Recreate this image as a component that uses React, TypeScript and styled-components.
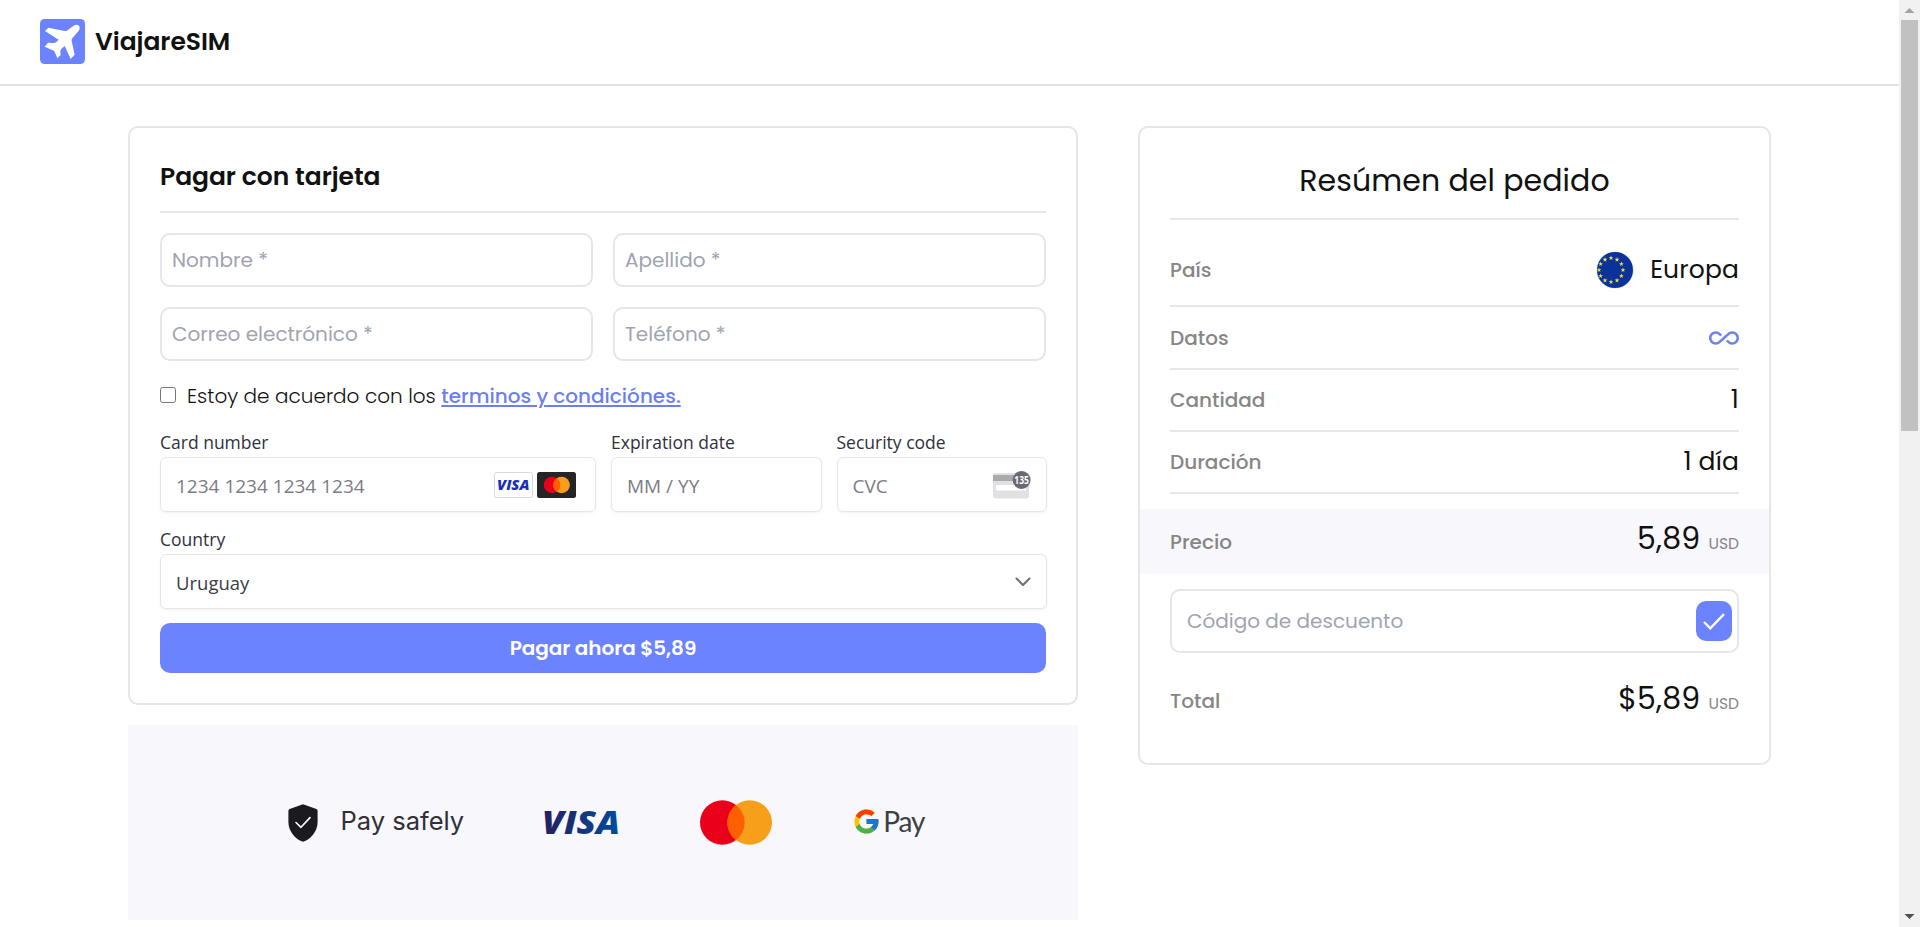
import React from 'react';
import { FcGoogle } from 'react-icons/fc';
import { MdAllInclusive } from 'react-icons/md';
import styled, { createGlobalStyle } from 'styled-components';

const GlobalStyle = createGlobalStyle`
    * {
        box-sizing: border-box;
    }
    body {
        margin: 0;
        background: #fff;
        color: #111;
        font-family: Poppins, Inter, sans-serif;
        font-size: 20px;
    }
`;

const Page = styled.div`
    display: flex;
    height: 100vh;
    overflow: hidden;
`;
const Main = styled.div`
    flex: 1;
    min-width: 0;
`;

const Header = styled.header`
    display: flex;
    align-items: center;
    gap: 10px;
    height: 86px;
    padding: 0 40px 1px;
    border-bottom: 2px solid #e2e2e2;
`;
const Brand = styled.span`
    font-size: 25px;
    font-weight: 600;
    letter-spacing: -0.05px;
`;

const Columns = styled.main`
    display: flex;
    align-items: flex-start;
    gap: 60px;
    padding: 40px 128px 0;
`;
const Left = styled.div`
    display: flex;
    flex-direction: column;
    gap: 20px;
    width: 950px;
`;
const Card = styled.section`
    border: 2px solid #e5e6ea;
    border-radius: 10px;
`;
const PaymentCard = styled(Card)`
    padding: 30px;
`;
const SummaryCard = styled(Card)`
    flex: 1;
    padding: 31px 0 14px;
`;

const CardTitle = styled.h2`
    margin: 0 0 20px;
    padding: 1px 0 16px;
    border-bottom: 2px solid #e5e7e9;
    font-size: 25px;
    font-weight: 600;
    line-height: 36px;
    letter-spacing: -0.05px;
`;
const SummaryTitle = styled.h2`
    margin: 0 30px;
    padding-bottom: 15px;
    border-bottom: 2px solid #e5e7e9;
    font-size: 30px;
    font-weight: 400;
    line-height: 44px;
    letter-spacing: 0.1px;
    text-align: center;
`;

const FormGrid = styled.div`
    display: grid;
    grid-template-columns: 1fr 1fr;
    gap: 20px;
`;
const Input = styled.input`
    width: 100%;
    height: 54px;
    padding: 0 10px;
    border: 2px solid #e5e6e8;
    border-radius: 10px;
    background: #fff;
    font: inherit;
    outline: none;
    &::placeholder {
        color: #9fa4b0;
        opacity: 1;
    }
`;

const Terms = styled.label`
    display: flex;
    align-items: center;
    height: 30px;
    margin-top: 20px;
    font-weight: 300;
    white-space: pre;
`;
const Checkbox = styled.input`
    width: 16px;
    height: 16px;
    margin: 0 11px 2px 0;
`;
const TermsLink = styled.a`
    color: #6c7ff0;
    font-weight: 500;
    text-decoration: underline;
    text-underline-offset: 2px;
`;

const CardFields = styled.div`
    display: grid;
    grid-template-columns: repeat(4, 1fr);
    gap: 15px;
    margin: 19px -1px 14px 0;
    font-family: 'Segoe UI', 'Open Sans', sans-serif;
`;
const Field = styled.div<{ $span?: number }>`
    grid-column: span ${p => p.$span || 1};
`;
const FieldLabel = styled.div`
    height: 27px;
    color: #30313d;
    font-size: 17.5px;
    line-height: 24px;
`;
const FieldBox = styled.div<{ $filled?: boolean }>`
    display: flex;
    align-items: center;
    gap: 4px;
    height: 55px;
    padding: 0 15px;
    border: 1px solid #e6e6e6;
    border-radius: 6px;
    box-shadow: 0 1px 2px rgba(0, 0, 0, 0.04), 0 3px 6px rgba(0, 0, 0, 0.02);
    color: ${p => (p.$filled ? '#3b3c47' : '#7b7c85')};
    font-size: ${p => (p.$filled ? 18.5 : 19)}px;
`;
const CardNumberBox = styled(FieldBox)`
    padding-right: 19px;
`;
const FieldText = styled.span`
    flex: 1;
    padding-top: 2px;
`;

const PayButton = styled.button`
    display: block;
    width: 100%;
    height: 50px;
    padding: 0;
    border: 0;
    border-radius: 10px;
    background: #6c83ff;
    color: #fff;
    font: inherit;
    font-weight: 600;
    letter-spacing: -0.08px;
`;

const TrustBar = styled.div`
    display: flex;
    align-items: center;
    justify-content: center;
    gap: 82px;
    height: 195px;
    padding: 0 0 0 7px;
    background: #f7f7fc;
`;
const PaySafely = styled.div`
    display: flex;
    align-items: center;
    gap: 22px;
    color: #303036;
    font-family: Inter, sans-serif;
    font-size: 25.5px;
    line-height: 38px;
    white-space: nowrap;
    span {
        padding-bottom: 4px;
    }
`;
const GooglePay = styled.div`
    display: flex;
    align-items: center;
    gap: 2px;
    margin-left: -2px;
    color: #3c4043;
    font-family: Lato, sans-serif;
    font-size: 28px;
    line-height: 34px;
    letter-spacing: -1px;
    svg {
        margin-bottom: 3px;
    }
    span {
        padding-bottom: 3px;
    }
`;

const Row = styled.div<{ $height?: number; $top?: number }>`
    display: flex;
    align-items: center;
    justify-content: space-between;
    height: ${p => p.$height || 62}px;
    margin: 0 30px;
    padding-top: ${p => p.$top || 0}px;
    border-bottom: 2px solid #e5e7e9;
`;
const RowLabel = styled.span`
    color: #868686;
    font-weight: 500;
`;
const RowValue = styled.span`
    display: flex;
    align-items: center;
    gap: 16px;
    font-size: 25px;
    letter-spacing: 0.15px;
`;
const ValueText = styled.span`
    padding-bottom: 1px;
`;
const PriceRow = styled(Row)`
    margin: 15px 0;
    padding: 0 30px;
    border: 0;
    background: #f7f7fc;
`;
const TotalRow = styled(Row)`
    border: 0;
`;
const Amount = styled.span`
    display: flex;
    align-items: baseline;
    gap: 8px;
    font-size: 30px;
    line-height: 40px;
    letter-spacing: 0.2px;
`;
const Currency = styled.span`
    color: #868686;
    font-size: 15.5px;
    letter-spacing: 0;
`;

const Discount = styled.div`
    display: flex;
    align-items: center;
    height: 64px;
    margin: 0 30px;
    padding: 0 5px;
    border: 2px solid #e5e6ea;
    border-radius: 10px;
`;
const DiscountInput = styled(Input)`
    border: 0;
`;
const ApplyButton = styled.button`
    display: flex;
    flex-shrink: 0;
    align-items: center;
    justify-content: center;
    width: 36px;
    height: 40px;
    padding: 0;
    border: 0;
    border-radius: 10px;
    background: #6c83ff;
`;

const Scrollbar = styled.div`
    display: flex;
    flex-direction: column;
    align-items: center;
    width: 21px;
    background: #f1f1f1;
`;
const Thumb = styled.div`
    width: 17px;
    height: 411px;
    margin-bottom: auto;
    background: #c1c1c1;
`;

const PlaneLogo = () => (
    <svg width="45" height="45" viewBox="0 0 135 135">
        <rect width="135" height="135" rx="14" fill="#6c83ff" />
        <path
            fill="#fff"
            d="M15 36 L25 26 L74 36 Q80 37 84 33 L101 20 Q110 14 117 20 Q122 27 115 37 L98 56 Q94 60 95 66 L104 107 L92 120 L74 81 L66 88 Q61 92 61 97 L62 108 L52 118 L43 96 L14 83 L24 71 L40 72 Q46 72 49 69 L56 62 Z"
        />
    </svg>
);

const VisaBadge = () => (
    <svg width="39" height="26" viewBox="0 0 39 26">
        <rect x="0.5" y="0.5" width="38" height="25" rx="2" fill="#fff" stroke="#d8d8dc" />
        <text x="3" y="18.4" textLength="32.5" lengthAdjust="spacingAndGlyphs" fill="#1a2fb8" fontFamily="Open Sans, sans-serif" fontSize="14.5" fontWeight="800" fontStyle="italic">VISA</text>
    </svg>
);

const MastercardBadge = () => (
    <svg width="39" height="26" viewBox="0 0 39 26">
        <rect width="39" height="26" rx="2.5" fill="#252525" />
        <circle cx="15" cy="13" r="8.3" fill="#eb001b" />
        <circle cx="24.6" cy="13" r="8.3" fill="#f79e1b" />
        <path d="M19.8 6.2 A8.3 8.3 0 0 1 19.8 19.8 A8.3 8.3 0 0 1 19.8 6.2 Z" fill="#ff5f00" />
    </svg>
);

const CvcIcon = () => (
    <svg width="38" height="28" viewBox="0 0 38 28">
        <rect y="2" width="36" height="25.5" rx="3" fill="#e1e1e3" />
        <rect y="4" width="36" height="6" fill="#a9a9ae" />
        <rect x="3" y="14" width="30" height="5.5" rx="1" fill="#fff" />
        <circle cx="28.6" cy="9" r="9" fill="#6a6973" />
        <text x="21.3" y="12.7" textLength="14.6" lengthAdjust="spacingAndGlyphs" fill="#fff" fontFamily="Open Sans, sans-serif" fontSize="10.5" fontWeight="700">135</text>
    </svg>
);

const Chevron = () => (
    <svg width="16" height="10" viewBox="0 0 16 10">
        <path d="M1.5 1.5 L8 8 L14.5 1.5" fill="none" stroke="#6d6e78" strokeWidth="2" strokeLinecap="round" strokeLinejoin="round" />
    </svg>
);

const Shield = () => (
    <svg width="30" height="38" viewBox="0 0 30 38">
        <path d="M15 0.3 L28.4 5 Q29.6 5.5 29.6 7 V18 C29.6 28 22 35.5 15 37.8 C8 35.5 0.4 28 0.4 18 V7 Q0.4 5.5 1.6 5 Z" fill="#1b1a20" />
        <path d="M8 18.5 L13 23.3 L22 13.6" fill="none" stroke="#fff" strokeWidth="1.6" strokeLinecap="round" strokeLinejoin="round" />
    </svg>
);

const VisaSvg = styled.svg`
    margin: 0 -8px 0 -4px;
`;
const VisaLogo = () => (
    <VisaSvg width="84" height="50" viewBox="0 0 84 50">
        <defs>
            <linearGradient id="visa" x1="0" x2="1">
                <stop offset="0" stopColor="#241f5e" />
                <stop offset="1" stopColor="#004c9e" />
            </linearGradient>
        </defs>
        <text x="0" y="36" textLength="78" lengthAdjust="spacingAndGlyphs" fill="url(#visa)" fontFamily="Open Sans, sans-serif" fontSize="32" fontWeight="800" fontStyle="italic">VISA</text>
    </VisaSvg>
);

const MastercardLogo = () => (
    <svg width="72" height="45" viewBox="0 0 72 45">
        <circle cx="22.3" cy="22.5" r="22.3" fill="#eb001b" />
        <circle cx="49.7" cy="22.5" r="22.3" fill="#f79e1b" />
        <path d="M36 4.9 A22.3 22.3 0 0 1 36 40.1 A22.3 22.3 0 0 1 36 4.9 Z" fill="#ff5f00" />
    </svg>
);

function starPoints(cx: number, cy: number, r: number) {
    return Array.from({ length: 10 }, (_, i) => {
        const radius = i % 2 ? r * 0.42 : r;
        const angle = (i * Math.PI) / 5 - Math.PI / 2;
        return `${cx + radius * Math.cos(angle)},${cy + radius * Math.sin(angle)}`;
    }).join(' ');
}

const EuropeFlag = () => (
    <svg width="38" height="38" viewBox="0 0 38 38">
        <circle cx="19" cy="19" r="18.6" fill="#d5e0f5" />
        <circle cx="19" cy="19" r="18" fill="#0a3299" />
        {Array.from({ length: 12 }, (_, i) => {
            const angle = (i * Math.PI) / 6;
            return <polygon key={i} points={starPoints(15 + 12 * Math.cos(angle), 19 + 12 * Math.sin(angle), 2.5)} fill="#e6e04a" />;
        })}
    </svg>
);

const ScrollArrow = ({ up }: { up?: boolean }) => (
    <svg width="21" height="20" viewBox="0 0 21 20">
        <path d={up ? 'M5.5 13 L10.5 8 L15.5 13 Z' : 'M5.5 7 L15.5 7 L10.5 12 Z'} fill={up ? '#a3a3a3' : '#505050'} />
    </svg>
);

const placeholders = ['Nombre *', 'Apellido *', 'Correo electrónico *', 'Teléfono *'];

export default function App() {
    return (
        <Page>
            <GlobalStyle />
            <Main>
                <Header>
                    <PlaneLogo />
                    <Brand>ViajareSIM</Brand>
                </Header>
                <Columns>
                    <Left>
                        <PaymentCard>
                            <CardTitle>Pagar con tarjeta</CardTitle>
                            <FormGrid>
                                {placeholders.map(placeholder => (
                                    <Input key={placeholder} placeholder={placeholder} />
                                ))}
                            </FormGrid>
                            <Terms>
                                <Checkbox type="checkbox" />
                                <span>Estoy de acuerdo con los </span>
                                <TermsLink>terminos y condiciónes.</TermsLink>
                            </Terms>
                            <CardFields>
                                <Field $span={2}>
                                    <FieldLabel>Card number</FieldLabel>
                                    <CardNumberBox>
                                        <FieldText>1234 1234 1234 1234</FieldText>
                                        <VisaBadge />
                                        <MastercardBadge />
                                    </CardNumberBox>
                                </Field>
                                <Field>
                                    <FieldLabel>Expiration date</FieldLabel>
                                    <FieldBox>
                                        <FieldText>MM / YY</FieldText>
                                    </FieldBox>
                                </Field>
                                <Field>
                                    <FieldLabel>Security code</FieldLabel>
                                    <FieldBox>
                                        <FieldText>CVC</FieldText>
                                        <CvcIcon />
                                    </FieldBox>
                                </Field>
                                <Field $span={4}>
                                    <FieldLabel>Country</FieldLabel>
                                    <FieldBox $filled>
                                        <FieldText>Uruguay</FieldText>
                                        <Chevron />
                                    </FieldBox>
                                </Field>
                            </CardFields>
                            <PayButton>Pagar ahora $5,89</PayButton>
                        </PaymentCard>
                        <TrustBar>
                            <PaySafely>
                                <Shield />
                                <span>Pay safely</span>
                            </PaySafely>
                            <VisaLogo />
                            <MastercardLogo />
                            <GooglePay>
                                <FcGoogle size={29} />
                                <span>Pay</span>
                            </GooglePay>
                        </TrustBar>
                    </Left>
                    <SummaryCard>
                        <SummaryTitle>Resúmen del pedido</SummaryTitle>
                        <Row $height={87} $top={15}>
                            <RowLabel>País</RowLabel>
                            <RowValue>
                                <EuropeFlag />
                                <ValueText>Europa</ValueText>
                            </RowValue>
                        </Row>
                        <Row $height={63}>
                            <RowLabel>Datos</RowLabel>
                            <MdAllInclusive size={30} color="#6c83ee" />
                        </Row>
                        <Row>
                            <RowLabel>Cantidad</RowLabel>
                            <RowValue>
                                <ValueText>1</ValueText>
                            </RowValue>
                        </Row>
                        <Row>
                            <RowLabel>Duración</RowLabel>
                            <RowValue>
                                <ValueText>1 día</ValueText>
                            </RowValue>
                        </Row>
                        <PriceRow $height={65}>
                            <RowLabel>Precio</RowLabel>
                            <Amount>
                                5,89
                                <Currency>USD</Currency>
                            </Amount>
                        </PriceRow>
                        <Discount>
                            <DiscountInput placeholder="Código de descuento" />
                            <ApplyButton aria-label="Aplicar">
                                <svg width="24" height="20" viewBox="0 0 24 20">
                                    <path d="M2 11 L8.3 17.3 L22 3.2" fill="none" stroke="#fff" strokeWidth="2.4" />
                                </svg>
                            </ApplyButton>
                        </Discount>
                        <TotalRow $height={96}>
                            <RowLabel>Total</RowLabel>
                            <Amount>
                                $5,89
                                <Currency>USD</Currency>
                            </Amount>
                        </TotalRow>
                    </SummaryCard>
                </Columns>
            </Main>
            <Scrollbar>
                <ScrollArrow up />
                <Thumb />
                <ScrollArrow />
            </Scrollbar>
        </Page>
    );
}
